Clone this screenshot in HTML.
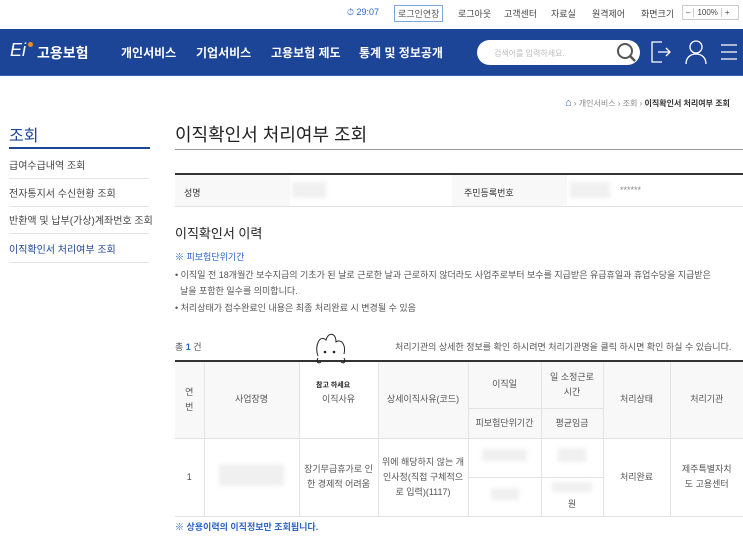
<!DOCTYPE html>
<html><head><meta charset="utf-8"><style>
*{margin:0;padding:0;box-sizing:border-box}
body{width:743px;height:537px;overflow:hidden;background:#fff;font-family:"Liberation Sans","Noto Sans CJK KR",sans-serif;color:#333;position:relative}
.a{position:absolute;white-space:nowrap}
.top{font-size:9px;color:#444}
.nav{position:absolute;left:0;top:29px;width:743px;height:47px;background:#1d4597;border-bottom:1px solid #3a62b0}
.nav .m{position:absolute;top:15px;color:#fff;font-size:12px;font-weight:bold}
.side{font-size:10px;color:#444}
.sl{position:absolute;left:9px;width:140px;height:1px;background:#e5e5e5}
table{position:absolute;left:175px;top:360px;width:568px;border-collapse:collapse;font-size:9px;color:#555;text-align:center}
td,th{border:1px solid #e3e3e3;font-weight:normal;line-height:15px}
tr:first-child th{border-top:2px solid #333}
th{background:#f8f8f8}
.blur{display:inline-block;background:#f0f0f0;filter:blur(2px)}
</style></head><body>
<div class="a top" style="left:347px;top:7px;color:#2a63c6">&#9201; 29:07</div>
<div class="a top" style="left:394px;top:5px;border:1px solid #7fa6e0;padding:1px 3px;color:#555">로그인연장</div>
<div class="a top" style="left:458px;top:7px">로그아웃</div>
<div class="a top" style="left:504px;top:7px">고객센터</div>
<div class="a top" style="left:551px;top:7px">자료실</div>
<div class="a top" style="left:592px;top:7px">원격제어</div>
<div class="a top" style="left:641px;top:7px">화면크기</div>
<div class="a top" style="left:682px;top:5px;border:1px solid #ccc;height:15px;width:57px;font-size:8px;line-height:13px"><span style="padding:0 3px">–</span><span style="border-left:1px solid #ccc;border-right:1px solid #ccc;padding:0 3px">100%</span><span style="padding:0 3px">+</span></div>
<div class="nav">
<div class="a" style="left:10px;top:11px;color:#fff;font-size:18px;font-style:italic">Ei</div>
<div class="a" style="left:28px;top:13px;width:5px;height:5px;border-radius:50%;background:#f08a24"></div>
<div class="a" style="left:37px;top:14px;color:#fff;font-size:14px;font-weight:bold">고용보험</div>
<div class="m a" style="left:121px">개인서비스</div>
<div class="m a" style="left:196px">기업서비스</div>
<div class="m a" style="left:271px">고용보험 제도</div>
<div class="m a" style="left:359px">통계 및 정보공개</div>
<div class="a" style="left:477px;top:11px;width:163px;height:25px;background:#fff;border-radius:13px;font-size:8px;color:#bbb;padding:8px 0 0 17px">검색어를 입력하세요.</div>
<svg class="a" style="left:615px;top:12px" width="24" height="24"><circle cx="10" cy="10" r="7" fill="none" stroke="#555" stroke-width="2"/><path d="M15 15l5 5" stroke="#555" stroke-width="2.5"/></svg>
<svg class="a" style="left:650px;top:11px" width="24" height="24" fill="none" stroke="#fff" stroke-width="1.3"><path d="M12 2H2v20h10"/><path d="M8 12h12M16 8l4 4-4 4"/></svg>
<svg class="a" style="left:684px;top:10px" width="24" height="26" fill="none" stroke="#fff" stroke-width="1.3"><circle cx="12" cy="8" r="6"/><path d="M2 25c0-6 4-10 10-10s10 4 10 10"/></svg>
<svg class="a" style="left:719px;top:13px" width="20" height="20" stroke="#fff" stroke-width="1.3"><path d="M2 3h16M2 10h16M2 17h16"/></svg>
</div>
<div class="a" style="left:565px;top:97px;font-size:8px;color:#888"><span style="color:#2a63c6;font-size:11px">⌂</span> › 개인서비스 › 조회 › <b style="color:#333">이직확인서 처리여부 조회</b></div>
<div class="a" style="left:9px;top:122px;font-size:16px;color:#1d4597">조회</div>
<div class="a" style="left:9px;top:147px;width:141px;height:2px;background:#1d4597"></div>
<div class="a side" style="left:9px;top:157px">급여수급내역 조회</div>
<div class="sl" style="top:178px"></div>
<div class="a side" style="left:9px;top:185px">전자통지서 수신현황 조회</div>
<div class="sl" style="top:206px"></div>
<div class="a side" style="left:9px;top:212px">반환액 및 납부(가상)계좌번호 조회</div>
<div class="sl" style="top:233px"></div>
<div class="a side" style="left:9px;top:241px;color:#1d4597">이직확인서 처리여부 조회</div>
<div class="sl" style="top:262px"></div>
<div class="a" style="left:175px;top:121px;font-size:18px;color:#222">이직확인서 처리여부 조회</div>
<div class="a" style="left:175px;top:149px;width:568px;height:1px;background:#999"></div>
<div class="a" style="left:175px;top:173px;width:568px;height:2px;background:#333"></div>
<div class="a" style="left:175px;top:175px;width:115px;height:31px;background:#f8f8f8"></div>
<div class="a" style="left:452px;top:175px;width:115px;height:31px;background:#f8f8f8"></div>
<div class="a" style="left:175px;top:206px;width:568px;height:1px;background:#e3e3e3"></div>
<div class="a" style="left:184px;top:186px;font-size:9px">성명</div>
<div class="a" style="left:464px;top:186px;font-size:9px">주민등록번호</div>
<div class="a blur" style="left:292px;top:182px;width:34px;height:16px"></div>
<div class="a blur" style="left:570px;top:182px;width:40px;height:16px"></div>
<div class="a" style="left:620px;top:185px;font-size:9px;color:#888">******</div>
<div class="a" style="left:175px;top:223px;font-size:13px;color:#222">이직확인서 이력</div>
<div class="a" style="left:175px;top:250px;font-size:9px;color:#2a63c6">※ 피보험단위기간</div>
<div class="a" style="left:175px;top:267px;font-size:9px;color:#555;line-height:16px;white-space:normal;width:560px">• 이직일 전 18개월간 보수지급의 기초가 된 날로 근로한 날과 근로하지 않더라도 사업주로부터 보수를 지급받은 유급휴일과 휴업수당을 지급받은<br>&nbsp;&nbsp;날을 포함한 일수를 의미합니다.</div>
<div class="a" style="left:175px;top:301px;font-size:9px;color:#555">• 처리상태가 접수완료인 내용은 최종 처리완료 시 변경될 수 있음</div>
<div class="a" style="left:175px;top:340px;font-size:9px;color:#555">총 <b style="color:#2a63c6">1</b> 건</div>
<div class="a" style="left:395px;top:340px;font-size:9px;color:#555">처리기관의 상세한 정보를 확인 하시려면 처리기관명을 클릭 하시면 확인 하실 수 있습니다.</div>
<table>
<tr style="height:47px"><th rowspan="2" style="width:29px;border-left:none">연<br>번</th><th rowspan="2" style="width:95px">사업장명</th><th rowspan="2" style="width:79px;background:#fff">이직사유</th><th rowspan="2" style="width:90px">상세이직사유(코드)</th><th style="width:73px">이직일</th><th style="width:62px">일 소정근로<br>시간</th><th rowspan="2" style="width:67px">처리상태</th><th rowspan="2" style="border-right:none">처리기관</th></tr>
<tr style="height:30px"><th>피보험단위기간</th><th>평균임금</th></tr>
<tr style="height:39px"><td rowspan="2" style="border-left:none">1</td><td rowspan="2"><span class="blur" style="width:65px;height:22px"></span></td><td rowspan="2">장기무급휴가로 인<br>한 경제적 어려움</td><td rowspan="2">위에 해당하지 않는 개<br>인사정(직접 구체적으<br>로 입력)(1117)</td><td><span class="blur" style="width:45px;height:12px"></span></td><td><span class="blur" style="width:28px;height:14px"></span></td><td rowspan="2">처리완료</td><td rowspan="2" style="border-right:none">제주특별자치<br>도 고용센터</td></tr>
<tr style="height:39px"><td><span class="blur" style="width:28px;height:12px"></span></td><td><span class="blur" style="width:40px;height:10px"></span><br>원</td></tr>
</table>
<svg class="a" style="left:310px;top:328px" width="60" height="60" fill="none" stroke="#222" stroke-width="1"><path d="M8 28c-4-10 2-22 8-16 2-8 10-8 10 2 6-4 10 4 8 12"/><circle cx="15" cy="24" r=".8" fill="#222"/><circle cx="24" cy="24" r=".8" fill="#222"/><path d="M8 30c-2 4 0 6 3 4M34 30c2 4 0 6-3 4"/></svg>
<div class="a" style="left:316px;top:380px;font-size:7px;font-weight:bold;color:#222">참고 하세요</div>
<div class="a" style="left:175px;top:520px;font-size:9px;color:#2a63c6;font-weight:bold">※ 상용이력의 이직정보만 조회됩니다.</div>
</body></html>
